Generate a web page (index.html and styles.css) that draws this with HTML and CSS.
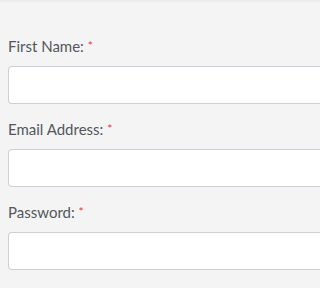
FILE: index.html
```html
<!DOCTYPE html>
<html>
<head>
<meta charset="utf-8">
<link rel="stylesheet" href="styles.css">
</head>
<body>
<form class="form">
  <div class="field">
    <label class="label">First Name: <span class="req">*</span></label>
    <input class="input" type="text">
  </div>
  <div class="field">
    <label class="label">Email Address: <span class="req">*</span></label>
    <input class="input" type="email">
  </div>
  <div class="field">
    <label class="label">Password: <span class="req">*</span></label>
    <input class="input" type="password">
  </div>
</form>
</body>
</html>
```
FILE: styles.css
```css
html, body {
  margin: 0;
  padding: 0;
  background: #f4f4f4;
  overflow: hidden;
}
body {
  border-top: 2px solid #ededed;
  font-family: Lato, "Open Sans", sans-serif;
}
.form {
  padding: 34px 0 0 8px;
  display: flex;
  flex-direction: column;
  gap: 15px;
}
.field {
  display: flex;
  flex-direction: column;
}
.label {
  font-size: 15px;
  line-height: 20px;
  height: 20px;
  color: #53575c;
  margin-bottom: 10px;
}
.req {
  color: #e53b3f;
  font-size: 12px;
  line-height: 1;
  vertical-align: 2px;
}
.input {
  box-sizing: border-box;
  height: 38px;
  width: 100%;
  margin: 0;
  border: 1px solid #cdd1d6;
  border-right: none;
  border-radius: 4px 0 0 4px;
  background: #fff;
}
```
